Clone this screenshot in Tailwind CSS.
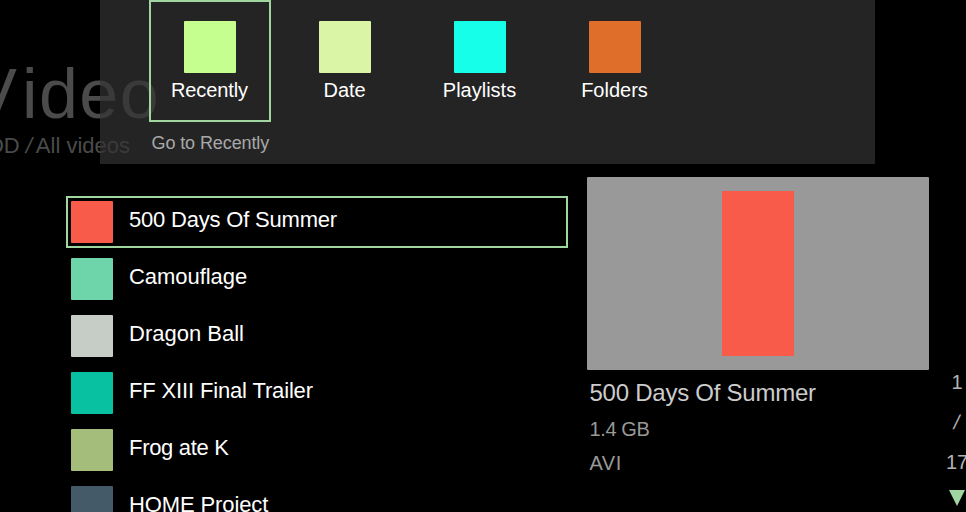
<!DOCTYPE html>
<html lang="en">
<head>
<meta charset="utf-8">
<title>Video</title>
<script src="https://cdn.jsdelivr.net/npm/@tailwindcss/browser@4"></script>
</head>
<body class="bg-black">
<div class="relative h-[512px] w-[966px] overflow-hidden bg-black font-['Liberation_Sans',sans-serif] text-white">

  <!-- Page heading, shown dimmed beneath the menu -->
  <header class="absolute top-[54px] right-[806px] text-right whitespace-nowrap text-[#4b4b4b]">
    <h1 class="text-[70px] leading-[80px] tracking-[1.4px]"><span class="tracking-[5px]">V</span>ideo</h1>
    <p class="mr-[30px] text-[22px] leading-[24px]">HDD<span class="ml-[6px] mr-[4px] inline-block -skew-x-12">/</span>All videos</p>
  </header>

  <!-- Menu panel -->
  <nav class="relative ml-[99.5px] h-[164px] w-[775px] bg-[#333333]/70 pl-[49.5px]">
    <div class="flex gap-[13px] text-[20px] leading-[24px]">
      <div class="flex h-[122px] w-[122px] flex-col items-center border-2 border-[#a0d6a0] pt-[19px]">
        <div class="size-[52px] rounded-[1px] bg-[#c5ff8f]"></div>
        <span class="mt-[5px] -ml-px tracking-[-0.1px]">Recently</span>
      </div>
      <div class="flex h-[122px] w-[122px] flex-col items-center pt-[21px]">
        <div class="size-[52px] rounded-[1px] bg-[#d9f5a5]"></div>
        <span class="mt-[5px] -ml-px tracking-[-0.1px]">Date</span>
      </div>
      <div class="flex h-[122px] w-[122px] flex-col items-center pt-[21px]">
        <div class="size-[52px] rounded-[1px] bg-[#16ffe8]"></div>
        <span class="mt-[5px] -ml-px">Playlists</span>
      </div>
      <div class="flex h-[122px] w-[122px] flex-col items-center pt-[21px]">
        <div class="size-[52px] rounded-[1px] bg-[#df6e2b]"></div>
        <span class="mt-[5px] -ml-px">Folders</span>
      </div>
    </div>
    <p class="mt-[11px] ml-[2.5px] text-[18px] leading-[20px] tracking-[-0.1px] text-[#a8a8a8]">Go to Recently</p>
  </nav>

  <main class="flex pl-[66px]">
    <!-- File list -->
    <ul class="mt-[32px] flex w-[502px] shrink-0 flex-col gap-[5px] text-[22px] leading-[26px]">
      <li class="flex h-[52px] gap-4 border-2 border-[#a0d6a0] p-[3px]">
        <div class="size-[42px] rounded-[1px] bg-[#f95b4b]"></div><span class="mt-[6px] tracking-[-0.2px]">500 Days Of Summer</span>
      </li>
      <li class="flex h-[52px] gap-4 p-[5px]">
        <div class="size-[42px] rounded-[1px] bg-[#6ed4a9]"></div><span class="mt-[6px] tracking-[-0.05px]">Camouflage</span>
      </li>
      <li class="flex h-[52px] gap-4 p-[5px]">
        <div class="size-[42px] rounded-[1px] bg-[#c6cdc6]"></div><span class="mt-[6px]">Dragon Ball</span>
      </li>
      <li class="flex h-[52px] gap-4 p-[5px]">
        <div class="size-[42px] rounded-[1px] bg-[#08c1a0]"></div><span class="mt-[6px] tracking-[-0.15px]">FF XIII Final Trailer</span>
      </li>
      <li class="flex h-[52px] gap-4 p-[5px]">
        <div class="size-[42px] rounded-[1px] bg-[#a5bd7b]"></div><span class="mt-[6px] tracking-[-0.3px]">Frog ate K</span>
      </li>
      <li class="flex h-[52px] gap-4 p-[5px]">
        <div class="size-[42px] rounded-[1px] bg-[#455a68]"></div><span class="mt-[6px] tracking-[-0.12px]">HOME Project</span>
      </li>
    </ul>

    <!-- Preview of the selected file -->
    <section class="mt-[13px] ml-[19px] w-[342px] shrink-0">
      <div class="flex h-[193px] justify-center rounded-[1px] bg-[#999999] pt-[13.5px]">
        <div class="h-[165.5px] w-[72px] bg-[#f95b4b]"></div>
      </div>
      <div class="pl-[2.5px] text-[20px] leading-[24px] whitespace-nowrap text-[#999999]">
        <h2 class="mt-[9px] text-[24px] leading-[28px] tracking-[-0.25px] text-[#cccccc]">500 Days Of Summer</h2>
        <p class="mt-[10px] tracking-[-0.4px]">1.4 GB</p>
        <p class="mt-[10px] tracking-[0.5px]">AVI</p>
      </div>
    </section>

    <!-- Position in the list -->
    <aside class="mt-[206px] ml-[13px] flex w-[30px] shrink-0 flex-col items-center text-[20px] leading-[24px] text-[#b3b3b3]">
      <span>1</span>
      <span class="mt-[16px] -skew-x-12">/</span>
      <span class="mt-[16px]">17</span>
      <svg class="mt-[16px]" width="16" height="16" viewBox="0 0 16 16"><path d="M0 0H16L8 16Z" fill="#a0d6a0"/></svg>
    </aside>
  </main>
</div>
</body>
</html>
